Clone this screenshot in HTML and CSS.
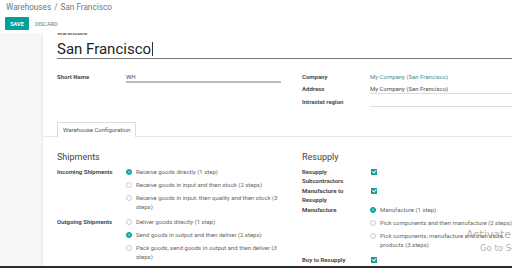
FILE: index.html
```html
<!DOCTYPE html>
<html lang="en">
<head>
  <meta charset="UTF-8">
  <meta name="viewport" content="width=device-width, initial-scale=1.0">
  <title>Warehouses / San Francisco</title>
  <link rel="stylesheet" href="styles.css">
</head>
<body>
  <div class="control-panel">
    <ol class="breadcrumb">
      <li class="crumb-link">Warehouses</li>
      <li class="crumb-sep">/</li>
      <li class="crumb-active">San Francisco</li>
    </ol>
    <div class="buttons">
      <button class="btn-save">SAVE</button>
      <button class="btn-discard">DISCARD</button>
    </div>
  </div>

  <div class="content">
    <div class="sheet">
      <div class="title">
        <label class="title-label">Warehouse</label>
        <div class="title-input">San Francisco<span class="caret"></span></div>
      </div>

      <div class="groups">
        <div class="group group-left">
          <div class="row">
            <div class="label">Short Name</div>
            <div class="field field-input field-thick">WH</div>
          </div>
        </div>
        <div class="group group-right">
          <div class="row">
            <div class="label">Company</div>
            <div class="field field-link">My Company (San Francisco)</div>
          </div>
          <div class="row">
            <div class="label">Address</div>
            <div class="field field-input">My Company (San Francisco)</div>
          </div>
          <div class="row">
            <div class="label">Intrastat region</div>
            <div class="field field-input"></div>
          </div>
        </div>
      </div>

      <div class="notebook">
        <div class="tab">Warehouse Configuration</div>
      </div>

      <div class="tab-pane">
        <div class="group group-left">
          <h2>Shipments</h2>
          <div class="row">
            <div class="label">Incoming Shipments</div>
            <div class="field radios">
              <div class="radio checked"><span class="dot"></span><span>Receive goods directly (1 step)</span></div>
              <div class="radio"><span class="dot"></span><span>Receive goods in input and then stock (2 steps)</span></div>
              <div class="radio"><span class="dot"></span><span>Receive goods in input, then quality and then stock (3 steps)</span></div>
            </div>
          </div>
          <div class="row">
            <div class="label">Outgoing Shipments</div>
            <div class="field radios">
              <div class="radio"><span class="dot"></span><span>Deliver goods directly (1 step)</span></div>
              <div class="radio checked"><span class="dot"></span><span>Send goods in output and then deliver (2 steps)</span></div>
              <div class="radio"><span class="dot"></span><span>Pack goods, send goods in output and then deliver (3 steps)</span></div>
            </div>
          </div>
        </div>

        <div class="group group-right">
          <h2>Resupply</h2>
          <div class="row">
            <div class="label">Resupply Subcontractors</div>
            <div class="field"><span class="checkbox"></span></div>
          </div>
          <div class="row">
            <div class="label">Manufacture to Resupply</div>
            <div class="field"><span class="checkbox"></span></div>
          </div>
          <div class="row">
            <div class="label">Manufacture</div>
            <div class="field radios">
              <div class="radio checked"><span class="dot"></span><span>Manufacture (1 step)</span></div>
              <div class="radio"><span class="dot"></span><span>Pick components and then manufacture (2 steps)</span></div>
              <div class="radio"><span class="dot"></span><span>Pick components, manufacture and then store products (3 steps)</span></div>
            </div>
          </div>
          <div class="row">
            <div class="label">Buy to Resupply</div>
            <div class="field"><span class="checkbox"></span></div>
          </div>
        </div>
      </div>
    </div>
  </div>

  <div class="watermark">
    <div class="wm-title">Activate Windows</div>
    <div class="wm-sub">Go to Settings to activate Windows.</div>
  </div>
  <div class="taskbar"></div>
</body>
</html>
```

FILE: styles.css
```css
body {
  margin: 0;
  width: 512px;
  height: 268px;
  overflow: hidden;
  font-family: Roboto, "Liberation Sans", sans-serif;
  color: #4c4c4c;
  background-color: #f7f7f7;
  position: relative;
}
.control-panel {
  height: 33px;
  background-color: #fff;
  box-sizing: border-box;
  padding: 1px 5px 0;
  position: relative;
  z-index: 2;
}
.breadcrumb {
  list-style: none;
  margin: 0;
  padding: 0 0 0 1px;
  display: flex;
  gap: 3px;
  font-size: 8.2px;
  line-height: 13px;
}
.crumb-link {
  color: #4e8287;
}
.crumb-sep,
.crumb-active {
  color: #777;
}
.buttons {
  display: flex;
  align-items: center;
  margin-top: 3px;
}
.btn-save {
  background-color: #00a09d;
  color: #fff;
  border: none;
  border-radius: 1px;
  font-family: inherit;
  font-size: 5.5px;
  font-weight: bold;
  width: 24px;
  height: 13px;
  padding: 0;
}
.btn-discard {
  background: none;
  border: none;
  color: #4e8287;
  font-family: inherit;
  font-size: 5.5px;
  padding: 0 0 0 6px;
}
.content {
  height: 235px;
  overflow: hidden;
  padding-left: 43px;
}
.sheet {
  background-color: #fff;
  margin-top: -4px;
  min-height: 300px;
  padding-left: 14px;
  box-shadow: -1px 0 2px rgba(0,0,0,0.06);
  width: 600px;
}
.title-label {
  display: block;
  font-size: 6px;
  line-height: 8px;
  font-weight: bold;
  color: #666;
}
.title-input {
  margin-top: 3px;
  font-size: 15px;
  line-height: 18px;
  color: #222;
  border-bottom: 1px solid #777;
  display: flex;
  align-items: center;
}
.caret {
  display: inline-block;
  width: 1px;
  height: 14px;
  background-color: #333;
  margin-left: 1px;
}
.groups,
.tab-pane {
  display: flex;
  gap: 21px;
}
.groups {
  margin-top: 13px;
}
.group-left {
  width: 224px;
}
.group-right {
  width: 210px;
}
.row {
  display: flex;
  font-size: 6px;
  line-height: 9px;
  margin-bottom: 3px;
}
.label {
  font-weight: bold;
  color: #4c4c4c;
  flex-shrink: 0;
}
.group-left .label {
  width: 69px;
}
.group-right .label {
  width: 62px;
  margin-right: 6px;
}
.field {
  flex: 1;
  color: #4c4c4c;
}
.field-input {
  border-bottom: 1px solid #ddd;
  min-height: 9px;
}
.field-thick {
  border-bottom: 2px solid #bbb;
}
.field-link {
  color: #3f8f8f;
}
.notebook {
  margin: 12px 0 0 -14px;
  padding-left: 14px;
  border-bottom: 1px solid #e6e6e6;
  display: flex;
}
.tab {
  border: 1px solid #ddd;
  border-bottom: none;
  font-size: 6px;
  line-height: 14px;
  padding: 0 5px;
  color: #555;
  margin-bottom: -1px;
  background-color: #fff;
  height: 15px;
  box-sizing: border-box;
}
.tab-pane {
  padding-top: 14px;
}
h2 {
  margin: 0 0 3px;
  font-size: 9px;
  line-height: 13px;
  font-weight: normal;
  color: #444;
}
.tab-pane .row {
  margin-bottom: 1px;
}
.radios {
  padding-bottom: 5px;
}
.radio {
  display: flex;
  gap: 3px;
  color: #666;
  margin-bottom: 4px;
}
.radio:last-child {
  margin-bottom: 0;
}
.dot {
  flex-shrink: 0;
  width: 6px;
  height: 6px;
  border-radius: 50%;
  border: 1px solid #ccc;
  box-sizing: border-box;
  margin-top: 1.5px;
  margin-right: 1px;
}
.radio.checked .dot {
  background-color: #00a09d;
  border-color: #00a09d;
  box-shadow: inset 0 0 0 1.3px #00a09d, inset 0 0 0 3px #fff;
}
.checkbox {
  display: inline-block;
  width: 6px;
  height: 6px;
  background-color: #1a9a96;
  position: relative;
  vertical-align: top;
  margin-top: 1.5px;
  margin-left: 1px;
}
.checkbox::after {
  content: "";
  position: absolute;
  left: 1.6px;
  top: 0.8px;
  width: 1.5px;
  height: 2.6px;
  border: solid #fff;
  border-width: 0 1px 1px 0;
  transform: rotate(40deg);
}
.watermark {
  position: absolute;
  left: 466px;
  top: 228px;
  color: rgba(150,150,150,0.75);
  font-family: "DejaVu Sans", sans-serif;
  white-space: nowrap;
  pointer-events: none;
}
.wm-title {
  font-size: 11px;
  line-height: 14px;
}
.wm-sub {
  font-size: 8.5px;
  line-height: 12px;
  margin-left: 14px;
}
.taskbar {
  position: absolute;
  left: 0;
  right: 0;
  bottom: 0;
  height: 2px;
  background-color: #2b2b2b;
}
```
